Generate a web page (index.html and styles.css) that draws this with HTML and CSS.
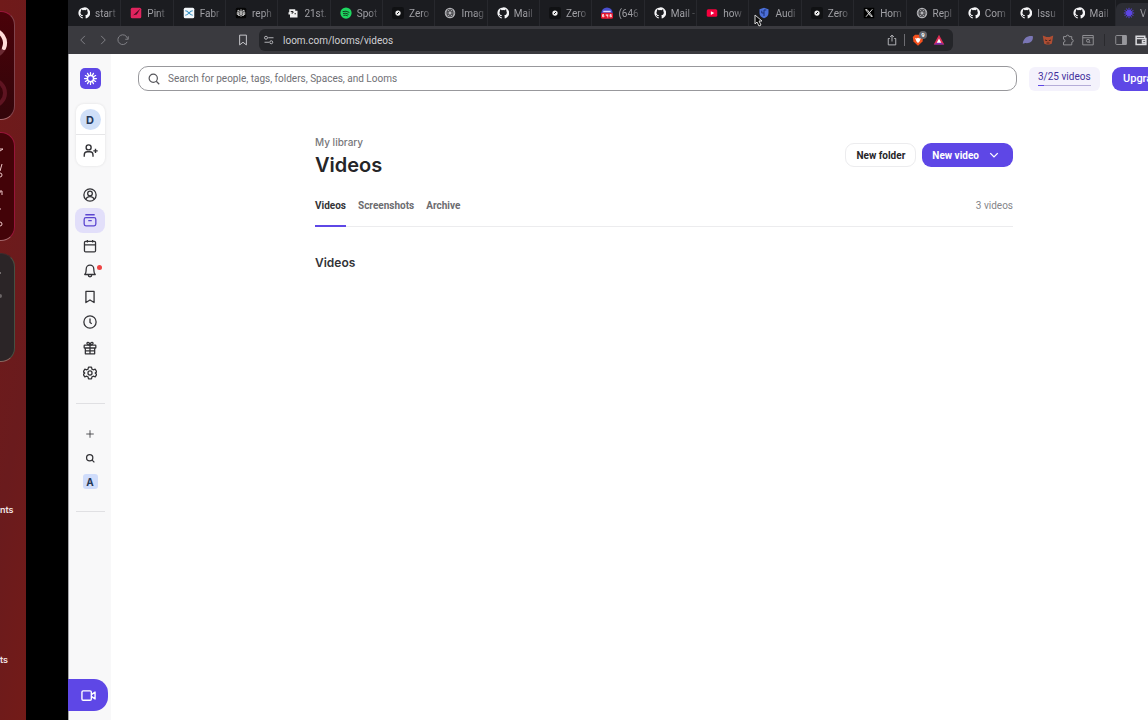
FILE: index.html
```html
<!DOCTYPE html>
<html lang="en">
<head>
  <meta charset="UTF-8">
  <meta name="viewport" content="width=device-width, initial-scale=1.0">
  <title>Videos | Library | Loom</title>
  <link rel="stylesheet" href="styles.css">
</head>
<body>

  <!-- shared icons -->
  <svg class="sprite" aria-hidden="true">
    <symbol id="github" viewBox="0 0 16 16"><path fill="#f5f5f7" d="M8 .5A7.5 7.5 0 0 0 .5 8c0 3.4 2.2 6.200 5.200 7.200.4.100.5-.2.5-.4v-1.600c-2.100.5-2.600-.9-2.600-.9-.3-.8-.8-1.100-.8-1.100-.7-.5 0-.5 0-.5.8.1 1.200.8 1.200.8.7 1.200 1.800.8 2.200.6.100-.5.3-.8.5-1-1.700-.2-3.400-.8-3.400-3.700 0-.8.3-1.500.8-2-.1-.2-.3-1 .1-2 0 0 .6-.2 2.100.8a7 7 0 0 1 3.800 0c1.500-1 2.100-.8 2.100-.8.4 1 .2 1.800.1 2 .5.5.8 1.200.8 2 0 2.900-1.700 3.500-3.400 3.700.3.2.5.7.5 1.400v2.300c0 .2.100.5.5.4A7.500 7.500 0 0 0 8 .5z"/></symbol>
    <symbol id="zero" viewBox="0 0 16 16"><rect width="16" height="16" rx="3" fill="#101113"/><circle cx="8" cy="8" r="3.500" fill="#f0f0f0"/><path d="M6.500 9.500l3-3" stroke="#101113" stroke-width="1.300"/></symbol>
    <symbol id="openai" viewBox="0 0 16 16"><circle cx="8" cy="8" r="7" fill="#b4b4b8"/><g fill="none" stroke="#3a3a3e" stroke-width=".9"><ellipse cx="8" cy="8" rx="5.500" ry="2.600"/><ellipse cx="8" cy="8" rx="5.500" ry="2.600" transform="rotate(60 8 8)"/><ellipse cx="8" cy="8" rx="5.500" ry="2.600" transform="rotate(120 8 8)"/></g></symbol>
    <symbol id="loom" viewBox="0 0 24 24">
      <path d="M12 2.500v19M2.500 12h19M7.250 3.800l9.500 16.400M16.750 3.800L7.250 20.200M3.800 7.250l16.400 9.500M3.800 16.750l16.400-9.500" fill="none" stroke="currentColor" stroke-width="2" stroke-linecap="round"/>
      <circle class="loom-eye" cx="12" cy="12" r="5" stroke="currentColor" stroke-width="2.400"/>
    </symbol>
  </svg>

  <aside class="desktop">
    <div class="widget rings">
      <svg viewBox="0 0 15 110"><circle cx="-8" cy="31" r="13" fill="none" stroke="#6b2a33" stroke-width="4"/><path d="M-8 18a13 13 0 0 1 12 18" fill="none" stroke="#ffdcd8" stroke-width="4" stroke-linecap="round"/><circle cx="-8" cy="81" r="13" fill="none" stroke="#5e1421" stroke-width="4"/></svg>
    </div>
    <div class="widget weather">
      <svg viewBox="0 0 15 109"><path d="M0 16h3l-3 2M2 31l-2 7M0 60v-2h2v4M0 76h1" fill="none" stroke="#eec6c8"/><circle cx="0" cy="42" r="2" fill="none" stroke="#eec6c8"/><circle cx="0" cy="91" r="2" fill="none" stroke="#eec6c8"/></svg>
    </div>
    <div class="widget dark">
      <svg viewBox="0 0 15 108"><circle cx="0" cy="19" r="1" fill="#8b8586"/><circle cx="0" cy="42" r="2" fill="#6b6566"/></svg>
    </div>
    <span class="file-label first">nts</span>
    <span class="file-label second">ts</span>
  </aside>

  <div class="browser">
    <div class="tabs">
      <div class="tab"><svg><use href="#github"/></svg><span>start</span></div>
      <div class="tab"><svg viewBox="0 0 16 16"><rect x="1" y="1" width="14" height="14" rx="2" fill="#e0245e"/><path d="M2 13L14 2 9 10l-5 1z" fill="#4c0b24"/></svg><span>Pint</span></div>
      <div class="tab"><svg viewBox="0 0 16 16"><rect x="1" y="1" width="14" height="14" rx="2" fill="#f4f8fb"/><path d="M3 5c5 0 5 6 10 6M3 11c5 0 5-6 10-6" fill="none" stroke="#3b93c4" stroke-width="1.500"/></svg><span>Fabr</span></div>
      <div class="tab"><svg viewBox="0 0 16 16"><rect x="1" y="1" width="14" height="14" rx="2" fill="#050505"/><path d="M8 3v10M4 4l4 3 4-3v4H4zM5 8v4l3-3 3 3V8M3 7v3h2M13 7v3h-2" fill="none" stroke="#d8d8d8" stroke-width="1.200"/></svg><span>reph</span></div>
      <div class="tab"><svg viewBox="0 0 16 16"><path d="M3 3h8v2h3v9H4v-4H2V7h1z" fill="#f1f1f1"/><path d="M5 6h3M8 6v2H6M10 9h2" stroke="#222" stroke-width="1.300" fill="none"/></svg><span>21st.</span></div>
      <div class="tab"><svg viewBox="0 0 16 16"><circle cx="8" cy="8" r="7.500" fill="#1ed760"/><path d="M4 6q4-1.500 8 1M4.500 8.500q3.500-1 6.500 1M5 11q3-.8 5 .6" fill="none" stroke="#123d20" stroke-width="1.300" stroke-linecap="round"/></svg><span>Spot</span></div>
      <div class="tab"><svg><use href="#zero"/></svg><span>Zero</span></div>
      <div class="tab"><svg><use href="#openai"/></svg><span>Imag</span></div>
      <div class="tab"><svg><use href="#github"/></svg><span>Mail</span></div>
      <div class="tab"><svg><use href="#zero"/></svg><span>Zero</span></div>
      <div class="tab"><svg viewBox="0 0 16 16"><circle cx="8" cy="8" r="7.500" fill="#4a4fd0"/><path d="M3 6h10" stroke="#dfe0ff" stroke-width="2"/><rect y="7.500" width="16" height="8" rx="2" fill="#e5162c"/><path d="M4 10H2v3h2v-1.500H2M7 9.500v2h2.500M9 9.500V14M14 10h-2v3h2v-1.500h-2" stroke="#fff" fill="none"/></svg><span>(646</span></div>
      <div class="tab"><svg><use href="#github"/></svg><span>Mail -</span></div>
      <div class="tab"><svg viewBox="0 0 16 16"><rect x="1" y="3" width="14" height="10" rx="2" fill="#f5003d"/><path d="M6.500 5.500v5L11 8z" fill="#fff"/></svg><span>how</span></div>
      <div class="tab"><svg viewBox="0 0 16 16"><path d="M8 1l6 2v5c0 4-3 6-6 7-3-1-6-3-6-7V3z" fill="#4b6fd8"/><path d="M8 4v8M8 4h3M8 8H5V5" stroke="#1c2f75" fill="none" stroke-width="1.300"/></svg><span>Audi</span></div>
      <div class="tab"><svg><use href="#zero"/></svg><span>Zero</span></div>
      <div class="tab"><svg viewBox="0 0 16 16"><rect x="1" y="1" width="14" height="14" fill="#000"/><path d="M3.500 3.500h2l7 9h-2zM12.500 3L4 13" fill="none" stroke="#eee" stroke-width="1.200"/></svg><span>Hom</span></div>
      <div class="tab"><svg><use href="#openai"/></svg><span>Repl</span></div>
      <div class="tab"><svg><use href="#github"/></svg><span>Com</span></div>
      <div class="tab"><svg><use href="#github"/></svg><span>Issu</span></div>
      <div class="tab"><svg><use href="#github"/></svg><span>Mail</span></div>
      <div class="tab active"><svg class="loom-tab"><use href="#loom"/></svg><span>V</span></div>
    </div>

    <div class="toolbar">
      <div class="nav-buttons">
        <button aria-label="Back"><svg viewBox="0 0 16 16"><path d="M10.500 2.500L5 8l5.500 5.500"/></svg></button>
        <button aria-label="Forward"><svg viewBox="0 0 16 16"><path d="M5.500 2.500L11 8l-5.500 5.500"/></svg></button>
        <button aria-label="Reload"><svg viewBox="0 0 16 16"><path d="M13.500 10.500a6.500 6.500 0 1 1 .5-4.500M15 3v4h-4"/></svg></button>
      </div>
      <button class="bookmark" aria-label="Bookmark"><svg viewBox="0 0 16 16"><path d="M3.500 1.500h9v13L8 11l-4.500 3.500z"/></svg></button>
      <div class="address">
        <svg class="site" viewBox="0 0 16 16"><circle cx="4" cy="5" r="2"/><path d="M7 5h7M2 11h6"/><circle cx="11" cy="11" r="2"/></svg>
        <input type="text" aria-label="Address" value="loom.com/looms/videos">
        <svg class="share" viewBox="0 0 16 16"><path d="M5 6H3v8.500h10V6h-2M8 10V1.500M5.500 4L8 1.500 10.500 4"/></svg>
        <i class="bar"></i>
        <span class="brave">
          <svg viewBox="0 0 16 16"><path d="M4 1h8l3 3-1 6-6 5.500L2 10 1 4z" fill="#f4511e" stroke="none"/><path d="M4 5l2 1 2-1 2 1 2-1-2 5-2 2-2-2z" fill="#fff" stroke="none"/></svg>
          <b>9</b>
        </span>
        <svg class="bat" viewBox="0 0 16 16"><path d="M8 1l7 13H1z" fill="#e02c55" stroke="none"/><path d="M1 14h14L8 10z" fill="#7b2fb5" stroke="none"/><path d="M8 6l3 5.500H5z" fill="#fff" stroke="none"/></svg>
      </div>
      <div class="extensions">
        <svg viewBox="0 0 16 16"><path d="M1 13C2 5 8 2 14.500 3c1 7-5 10-10 9z" fill="#7a76b5" stroke="none"/></svg>
        <svg viewBox="0 0 16 16"><path d="M1 2l5 2h4l5-2-1 6-1 5-3 1H6l-3-1-1-5z" fill="#b04e33" stroke="none"/><path d="M4 8l3 1M12 8L9 9M6 12h4" stroke="#3c1f1c"/></svg>
        <svg viewBox="0 0 16 16"><path d="M2 3.500h3.500a2 2 0 1 1 4 0H13V7a2 2 0 1 1 0 4v3.500H2V11a2 2 0 1 0 0-4z"/></svg>
        <svg viewBox="0 0 16 16"><path d="M1 2h14v12.500H1zM1 5h14"/><circle cx="8" cy="9" r="2"/><path d="M9.500 10.500L11 12"/></svg>
        <i class="bar"></i>
        <svg viewBox="0 0 16 16"><rect x="1" y="2" width="14" height="12" rx="1"/><path d="M10 2h5v12h-5z" fill="#97979c"/></svg>
        <svg class="wallet" viewBox="0 0 16 16"><path d="M1.500 3H13v3h1.500v8h-13zM1.500 6H13M14.500 8.500H10v3h4.500"/></svg>
      </div>
    </div>

    <div class="page">
      <aside class="sidebar">
        <a href="#" class="logo" aria-label="Loom"><svg><use href="#loom"/></svg></a>
        <div class="workspace">
          <button class="avatar">D</button>
          <button class="invite" aria-label="Invite people"><svg viewBox="0 0 24 24"><circle cx="9" cy="7" r="4"/><path d="M2 22v-3a5 5 0 0 1 5-5h4a5 5 0 0 1 5 5v3M20 9v7M16.500 12.500h7"/></svg></button>
        </div>
        <nav>
          <a href="#" aria-label="For you"><svg viewBox="0 0 24 24"><circle cx="12" cy="12" r="10.500"/><circle cx="12" cy="9.500" r="4"/><path d="M5 20c1-7 13-7 14 0"/></svg></a>
          <a href="#" class="current" aria-label="Library"><svg viewBox="0 0 24 24"><rect x="2" y="8" width="20" height="14" rx="3"/><path d="M4 3h16M9 13h6"/></svg></a>
          <a href="#" aria-label="Meetings"><svg viewBox="0 0 24 24"><rect x="2.500" y="4" width="19" height="18" rx="2"/><path d="M2.500 10h19M7.500 1.500V6M16.500 1.500V6"/></svg></a>
          <a href="#" aria-label="Notifications"><svg viewBox="0 0 24 24"><path d="M3 18c3-3 2-5 2.500-9.500a6.500 6.500 0 0 1 13 0C19 13 18 15 21 18zM9 19c0 4 6 4 6 0"/></svg><i class="dot"></i></a>
          <a href="#" aria-label="Watch later"><svg viewBox="0 0 24 24"><path d="M5 2.500h14v19L12 17l-7 4.500z"/></svg></a>
          <a href="#" aria-label="History"><svg viewBox="0 0 24 24"><circle cx="12" cy="12" r="10.500"/><path d="M12 6v7l3 2"/></svg></a>
          <a href="#" aria-label="Earn"><svg viewBox="0 0 24 24"><rect x="2" y="7" width="20" height="5" rx="1"/><path d="M4 12v10h16V12M12 7v15M4 17h16M12 7C8 7 6 5 7 3s5 0 5 4c0-4 4-6 5-4s-1 4-5 4"/></svg></a>
          <a href="#" aria-label="Settings"><svg viewBox="0 0 24 24"><path d="M9.500 2h5l1 3.500 2 1L21 5.500l2.500 4.500-2.500 2 2.500 2.500-2.500 4-3.500-1-2 1-1 3.500h-5l-1-3.500-2-1-3.500 1L.5 14.500 3 12 .5 10 3 5.500l3.500 1 2-1z"/><circle cx="12" cy="12" r="3.500"/></svg></a>
        </nav>
        <div class="spaces">
          <button aria-label="Create a Space"><svg viewBox="0 0 16 16"><path d="M8 2v12M2 8h12"/></svg></button>
          <button aria-label="Browse Spaces"><svg class="find" viewBox="0 0 16 16"><circle cx="7.500" cy="7.500" r="5"/><path d="M11 11l4 4"/></svg></button>
          <button class="space">A</button>
        </div>
        <button class="record" aria-label="Record a video"><svg viewBox="0 0 24 24"><rect x="1.500" y="4.500" width="15" height="15" rx="2"/><path d="M16.500 10.500l6-4v11l-6-4"/></svg></button>
      </aside>

      <div class="content">
        <header class="topbar">
          <label class="search">
            <svg viewBox="0 0 16 16"><circle cx="7" cy="7" r="5.500"/><path d="M11 11l4 4"/></svg>
            <input type="text" aria-label="Search" placeholder="Search for people, tags, folders, Spaces, and Looms">
          </label>
          <a href="#" class="quota">3/25 videos<i></i></a>
          <button class="upgrade">Upgrade</button>
        </header>

        <main>
          <div class="heading">
            <div>
              <p>My library</p>
              <h1>Videos</h1>
            </div>
            <div class="actions">
              <button class="new-folder">New folder</button>
              <button class="new-video">New video<svg viewBox="0 0 16 16"><path d="M3 5.500L8 10.500l5-5"/></svg></button>
            </div>
          </div>
          <div class="library-tabs">
            <a href="#" class="selected">Videos</a>
            <a href="#">Screenshots</a>
            <a href="#">Archive</a>
            <span>3 videos</span>
          </div>
          <h2>Videos</h2>
        </main>
      </div>
    </div>

    <svg class="cursor" viewBox="0 0 10 13"><path d="M1 1v9l2-2 2 4 2-1-2-4h3z" fill="#0a0a0a" stroke="#d8d8d8"/></svg>
  </div>

</body>
</html>
```

FILE: styles.css
```css
* {
  box-sizing: border-box;
}

body {
  margin: 0;
  min-height: 100vh;
  display: flex;
  background: #000;
  font-family: Roboto, Inter, sans-serif;
  overflow: hidden;
}

button,
input {
  font: inherit;
  color: inherit;
  border: none;
  background: none;
  padding: 0;
}

a {
  color: inherit;
  text-decoration: none;
}

svg {
  display: block;
  flex: none;
}

.sprite {
  display: none;
}

/* desktop behind the window */
.desktop {
  position: relative;
  flex: 0 0 26px;
  margin-right: 42px;
  padding-top: 11px;
  background: linear-gradient(100deg, #701a1a, #6a1b1d 60%, #731b18);
  overflow: hidden;
}

.widget {
  width: 15px;
  height: 109px;
  margin-bottom: 12px;
  border: 1px solid #98153a;
  border-left: none;
  border-bottom-color: #a4666a;
  border-radius: 0 14px 14px 0;
  background: #430308;
  overflow: hidden;
}

.widget svg {
  width: 15px;
}

.widget.rings {
  background: linear-gradient(#4a0209, #32050a);
  border-right-color: #80434c;
}

.widget.dark {
  background: #2b2527;
  border-color: #3b2c2e;
  border-right-color: #465043;
  border-bottom-color: #8b665f;
}

.file-label {
  position: absolute;
  left: 0;
  color: #f3e6e6;
  font-family: Inter, sans-serif;
  font-size: 9px;
  line-height: 12px;
  font-weight: 600;
}

.file-label.first {
  top: 504px;
}

.file-label.second {
  top: 654px;
}

/* browser window */
.browser {
  position: relative;
  flex: 1;
  min-width: 0;
  display: flex;
  flex-direction: column;
  background: #fff;
}

.tabs {
  display: flex;
  height: 26px;
  padding-left: 1px;
  background: #1b1c20;
}

.tab {
  flex: 1;
  min-width: 0;
  display: flex;
  align-items: center;
  gap: 5px;
  padding: 0 2px 0 9px;
  border-right: 1px solid #27282d;
  color: #a0a0a5;
  font-size: 10px;
}

.tab svg {
  width: 12px;
  height: 12px;
}

.tab span {
  white-space: nowrap;
  -webkit-mask-image: linear-gradient(90deg, #000 60%, rgba(0, 0, 0, 0.3));
  mask-image: linear-gradient(90deg, #000 60%, rgba(0, 0, 0, 0.3));
}

.tab.active {
  flex: 0 0 32px;
  margin-top: 3px;
  padding: 0 0 3px 7px;
  border: none;
  border-radius: 6px 0 0 0;
  background: #2c2d33;
}

.loom-tab {
  color: #5b45e0;
}

.loom-eye {
  fill: #5e47e6;
}

.toolbar {
  display: flex;
  align-items: center;
  height: 28px;
  padding: 0 1px 0 9px;
  background: #3a3a3f;
}

.toolbar svg {
  width: 12px;
  height: 12px;
  fill: none;
  stroke: #97979c;
  stroke-width: 1.2;
}

.toolbar button,
.address,
.extensions,
.nav-buttons {
  display: flex;
  align-items: center;
}

.nav-buttons {
  gap: 8px;
}

.nav-buttons svg {
  stroke: #88888d;
}

.toolbar .bookmark {
  margin: 0 10px 0 108px;
}

.toolbar .bookmark svg {
  stroke: #d4d4d8;
}

.address {
  flex: 1;
  height: 22px;
  padding: 0 8px 0 4px;
  border-radius: 6px;
  background: #242529;
}

.address input {
  flex: 1;
  min-width: 0;
  margin-left: 8px;
  color: #d0d0d4;
  font-size: 10px;
}

.address svg {
  stroke: #c0c0c4;
}

.bar {
  width: 1px;
  height: 12px;
  background: #6d6d72;
}

.address .bar {
  margin: 0 7px 0 6px;
}

.brave {
  position: relative;
  margin-right: 9px;
}

.brave b {
  position: absolute;
  top: -3px;
  right: -3px;
  width: 8px;
  height: 8px;
  border-radius: 4px;
  background: #66676e;
  color: #fff;
  font-size: 6px;
  line-height: 8px;
  text-align: center;
}

.extensions {
  gap: 8px;
  margin-left: 69px;
}

.extensions .bar {
  margin: 0 2px;
  background: #2a2a2e;
}

.extensions .wallet {
  stroke: #dadade;
  stroke-width: 2;
}

.cursor {
  position: absolute;
  top: 14px;
  left: 686px;
  width: 10px;
  height: 13px;
}

/* loom page */
.page {
  flex: 1;
  display: flex;
}

.sidebar {
  flex: 0 0 43px;
  display: flex;
  flex-direction: column;
  align-items: center;
  padding: 14px 0 9px;
  border-left: 1px solid #a5a5a8;
  background: #f8f8f9;
  color: #333337;
}

.sidebar svg {
  width: 15px;
  height: 15px;
  fill: none;
  stroke: currentColor;
  stroke-width: 2.2;
  stroke-linejoin: round;
}

.logo {
  display: grid;
  place-items: center;
  width: 21px;
  height: 21px;
  border-radius: 5px;
  background: #5e47e6;
  color: #fff;
}

.sidebar .logo svg {
  stroke: none;
}

.workspace {
  width: 29px;
  height: 62px;
  margin: 15px 0 16px;
  border-radius: 8px;
  background: #fff;
  box-shadow: 0 0 3px rgba(0, 0, 0, 0.1);
}

.avatar {
  display: block;
  width: 21px;
  height: 21px;
  margin: 5px 4px 4px;
  border-radius: 50%;
  background: #cfdff8;
  color: #253858;
  font-family: Inter, sans-serif;
  font-size: 11px;
  font-weight: 700;
}

.invite {
  display: grid;
  place-items: center;
  width: 29px;
  height: 32px;
  border-top: 1px solid #e6e6e8;
}

nav {
  display: flex;
  flex-direction: column;
  height: 204px;
}

nav a {
  position: relative;
  flex: 1;
  width: 30px;
  display: grid;
  place-items: center;
  border-radius: 8px;
}

.sidebar nav svg {
  width: 14px;
  height: 14px;
}

nav .current {
  background: #e2dffa;
  color: #5b45d0;
}

.dot {
  position: absolute;
  top: 6px;
  right: 3px;
  width: 5px;
  height: 5px;
  border-radius: 50%;
  background: #ee4444;
}

.spaces {
  display: flex;
  flex-direction: column;
  align-items: center;
  gap: 9px;
  width: 29px;
  height: 109px;
  margin-top: 17px;
  padding-top: 22px;
  border: 1px solid #e0e0e3;
  border-width: 1px 0;
}

.spaces button {
  display: grid;
  place-items: center;
  width: 15px;
  height: 15px;
}

.sidebar .spaces svg {
  width: 10px;
  height: 10px;
  stroke-width: 1.3;
}

.sidebar .spaces .find {
  stroke-width: 2;
}

.spaces .space {
  border-radius: 3px;
  background: #cfdcfb;
  color: #253858;
  font-family: Inter, sans-serif;
  font-size: 10px;
  font-weight: 700;
}

.record {
  display: grid;
  place-items: center;
  align-self: stretch;
  height: 32px;
  margin: auto 3px 0 -1px;
  border-radius: 0 14px 14px 0;
  background: #5e47e6;
  color: #fff;
}

.content {
  flex: 1;
  min-width: 0;
  overflow: hidden;
}

.topbar {
  display: flex;
  align-items: center;
  gap: 12px;
  margin: 12px -34px 0 27px;
}

.search {
  flex: 1;
  display: flex;
  align-items: center;
  gap: 8px;
  height: 25px;
  padding: 0 9px;
  border: 1px solid #98989c;
  border-radius: 10px;
}

.search svg {
  width: 12px;
  height: 12px;
  fill: none;
  stroke: #55555a;
  stroke-width: 1.6;
}

.search input {
  flex: 1;
  font-size: 10px;
}

.search input::placeholder {
  color: #707075;
}

.quota {
  width: 71px;
  height: 24px;
  padding: 4px 9px;
  border-radius: 6px;
  background: #f4f2fc;
  color: #43319c;
  font-size: 10px;
  line-height: 12px;
  white-space: nowrap;
}

.quota i {
  display: block;
  height: 1px;
  margin-top: 2px;
  background: linear-gradient(90deg, #5e47e6 12%, #b5add8 12%);
}

.upgrade {
  width: 70px;
  height: 24px;
  padding-left: 11px;
  border-radius: 9px;
  background: #5e47e6;
  color: #fff;
  font-size: 11px;
  font-weight: 500;
  text-align: left;
}

main {
  padding: 44px 135px 0 204px;
}

.heading {
  display: flex;
  justify-content: space-between;
}

.heading p {
  margin: 0;
  color: #77777b;
  font-family: Inter, sans-serif;
  font-size: 10px;
  line-height: 14px;
  font-weight: 500;
}

h1 {
  margin: 2px 0 0;
  color: #252528;
  font-family: Inter, sans-serif;
  font-size: 20px;
  line-height: 28px;
  font-weight: 600;
}

.actions {
  display: flex;
  gap: 6px;
  padding-top: 8px;
}

.actions button {
  display: flex;
  align-items: center;
  height: 24px;
  padding: 0 10px;
  border-radius: 9px;
  font-size: 10px;
  font-weight: 700;
}

.actions .new-folder {
  border: 1px solid #ececee;
  color: #252528;
}

.actions .new-video {
  padding-right: 13px;
  background: #5e47e6;
  color: #fff;
}

.new-video svg {
  width: 12px;
  height: 12px;
  margin-left: 9px;
  fill: none;
  stroke: currentColor;
  stroke-width: 1.8;
}

.library-tabs {
  display: flex;
  gap: 12px;
  margin-top: 20px;
  border-bottom: 1px solid #ececee;
  color: #6c6c70;
  font-size: 10px;
  line-height: 14px;
  font-weight: 700;
}

.library-tabs a {
  padding-bottom: 12px;
}

.library-tabs .selected {
  margin-bottom: -1px;
  padding-bottom: 12px;
  border-bottom: 2px solid #5e47e6;
  color: #333337;
}

.library-tabs span {
  margin-left: auto;
  color: #858589;
  font-weight: 400;
}

h2 {
  margin: 27px 0 0;
  color: #333337;
  font-family: Inter, sans-serif;
  font-size: 12px;
  line-height: 18px;
  font-weight: 600;
}
```
